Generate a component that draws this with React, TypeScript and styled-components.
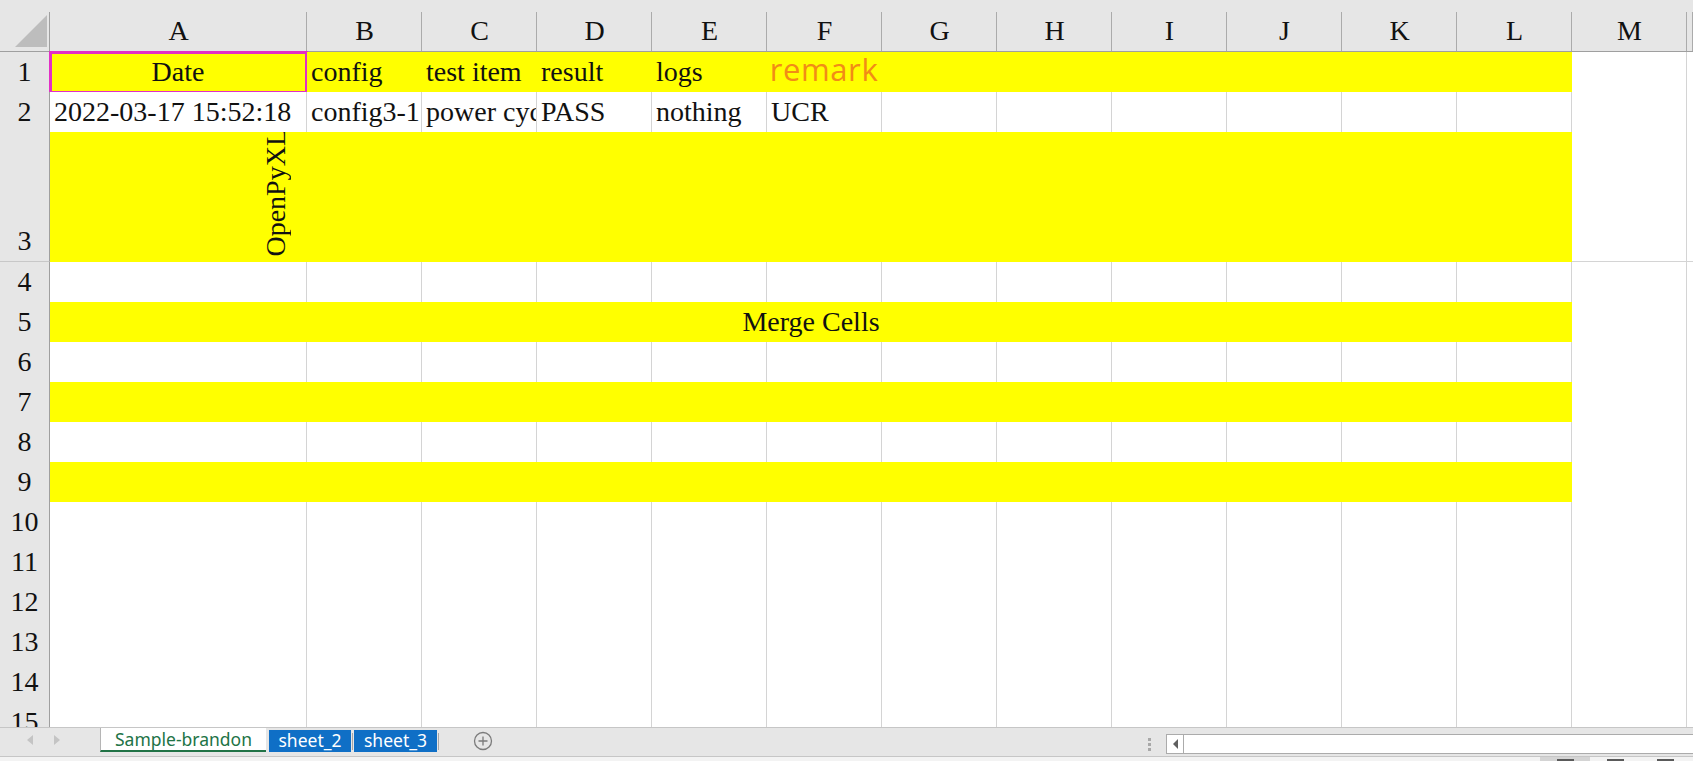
import styled, { createGlobalStyle } from 'styled-components';

const YELLOW = '#ffff00';
const GRID_LINE = '#d4d4d4';
const HEADER_BG = '#e6e6e6';
const HEADER_LINE = '#ababab';
const HEADER_EDGE = '#9f9f9f';
const EXCEL_GREEN = '#217346';
const TAB_BLUE = '#0f6fc6';

const COLUMNS = ['A', 'B', 'C', 'D', 'E', 'F', 'G', 'H', 'I', 'J', 'K', 'L', 'M'];
const TEMPLATE = '50px 257px repeat(12, 115px) 1fr';

const GlobalStyle = createGlobalStyle`
	html, body {
		margin: 0;
		padding: 0;
		background: #ffffff;
		overflow: hidden;
	}
	#root {
		width: 1693px;
		height: 761px;
	}
`;

const Window = styled.div`
	width: 1693px;
	height: 761px;
	display: flex;
	flex-direction: column;
	font-family: 'Liberation Serif', 'Times New Roman', serif;
	color: #111111;
	overflow: hidden;
`;

const Sheet = styled.div`
	flex: 0 0 727px;
	display: flex;
	flex-direction: column;
	overflow: hidden;
`;

const Row = styled.div<{ $height: number }>`
	display: grid;
	grid-template-columns: ${TEMPLATE};
	height: ${(p) => p.$height}px;
	flex-shrink: 0;
`;

const HeaderRow = styled(Row)`
	box-sizing: border-box;
	background: ${HEADER_BG};
	border-bottom: 1px solid ${HEADER_EDGE};
`;

const ColumnHeader = styled.div`
	display: flex;
	align-items: flex-end;
	justify-content: center;
	font-size: 28px;
	line-height: 40px;
	background: linear-gradient(${HEADER_LINE}, ${HEADER_LINE}) right bottom / 1px 39px no-repeat;
`;

const Corner = styled(ColumnHeader)`
	justify-content: flex-end;
	padding: 0 3px 4px 0;
	background: linear-gradient(${HEADER_EDGE}, ${HEADER_EDGE}) right bottom / 1px 39px no-repeat;
`;

const RowHeader = styled.div`
	box-sizing: border-box;
	display: flex;
	align-items: flex-end;
	justify-content: center;
	background: ${HEADER_BG};
	border-right: 1px solid ${HEADER_EDGE};
	border-bottom: 1px solid #c8c8c8;
	font-size: 28px;
	line-height: 40px;
`;

const Cell = styled.div<{ $fill?: boolean; $span?: number; $align?: 'left' | 'center' | 'right'; $selected?: boolean }>`
	box-sizing: border-box;
	grid-column: span ${(p) => p.$span ?? 1};
	display: flex;
	align-items: flex-end;
	justify-content: ${(p) => (p.$align === 'center' ? 'center' : p.$align === 'right' ? 'flex-end' : 'flex-start')};
	padding: 0 4px;
	min-width: 0;
	overflow: hidden;
	white-space: nowrap;
	font-size: 28px;
	line-height: 40px;
	background: ${(p) => (p.$fill ? YELLOW : '#ffffff')};
	border-right: 1px solid ${(p) => (p.$fill ? YELLOW : GRID_LINE)};
	border-bottom: 1px solid ${(p) => (p.$fill ? YELLOW : GRID_LINE)};
	outline: ${(p) => (p.$selected ? '3px solid #e22fc5' : 'none')};
	outline-offset: -2px;
`;

const VerticalCell = styled(Cell)`
	padding: 0 16px 4px 0;
`;

const VerticalText = styled.span`
	writing-mode: vertical-rl;
	transform: rotate(180deg);
	line-height: 28px;
`;

const RemarkText = styled.span`
	font-family: 'Open Sans', 'Noto Sans', sans-serif;
	font-size: 31px;
	font-weight: 500;
	line-height: 30px;
	letter-spacing: 0.6px;
	color: #f28c16;
	margin-bottom: 8px;
`;

const MergedText = styled.span`
	padding-left: 1px;
`;

/* tab bar */

const TabBar = styled.div`
	flex: 0 0 28px;
	box-sizing: border-box;
	display: flex;
	align-items: flex-start;
	background: ${HEADER_BG};
	border-top: 1px solid #c6c6c6;
	font-family: 'Noto Sans', 'Open Sans', sans-serif;
	font-size: 17.5px;
`;

const NavArrows = styled.div`
	width: 100px;
	height: 24px;
	display: flex;
	align-items: center;
	gap: 21px;
	padding-left: 27px;
	box-sizing: border-box;
`;

const NavArrow = styled.span<{ $dir: 'left' | 'right' }>`
	width: 0;
	height: 0;
	border-top: 5px solid transparent;
	border-bottom: 5px solid transparent;
	${(p) => (p.$dir === 'left' ? 'border-right' : 'border-left')}: 6px solid #c4c4c4;
`;

const ActiveTab = styled.div`
	box-sizing: border-box;
	width: 166px;
	height: 24px;
	display: flex;
	align-items: center;
	justify-content: center;
	background: #ffffff;
	border-left: 1px solid #b5b5b5;
	border-bottom: 2px solid ${EXCEL_GREEN};
	color: ${EXCEL_GREEN};
	padding-bottom: 1px;
`;

const SheetTab = styled.div<{ $width: number; $gap?: number }>`
	box-sizing: border-box;
	width: ${(p) => p.$width}px;
	height: 22px;
	margin: 2px 0 0 ${(p) => p.$gap ?? 0}px;
	display: flex;
	align-items: center;
	justify-content: center;
	background: ${TAB_BLUE};
	color: #ffffff;
	padding-bottom: 3px;
`;

const TabSeparator = styled.span`
	width: 1px;
	height: 17px;
	margin: 5px 1px 0;
	background: #a6a6a6;
`;

const AddSheet = styled.div`
	width: 20px;
	height: 20px;
	margin: 3px 0 0 33px;
	display: flex;
`;

const RightGroup = styled.div`
	margin-left: auto;
	display: flex;
	align-items: center;
	gap: 15px;
	height: 24px;
	margin-top: 4px;
`;

const Grip = styled.div`
	display: flex;
	flex-direction: column;
	gap: 2px;
`;

const GripDot = styled.span`
	width: 3px;
	height: 3px;
	background: #a8a8a8;
`;

const ScrollBar = styled.div`
	box-sizing: border-box;
	width: 527px;
	height: 20px;
	display: flex;
	background: #ffffff;
	border: 1px solid ${HEADER_LINE};
	border-right: none;
`;

const ScrollButton = styled.div`
	box-sizing: border-box;
	width: 17px;
	height: 100%;
	display: flex;
	align-items: center;
	justify-content: center;
	border-right: 1px solid ${HEADER_LINE};
`;

const ScrollArrow = styled.span`
	width: 0;
	height: 0;
	border-top: 5px solid transparent;
	border-bottom: 5px solid transparent;
	border-right: 5px solid #606060;
`;

/* status strip */

const StatusStrip = styled.div`
	flex: 0 0 6px;
	box-sizing: border-box;
	display: flex;
	justify-content: flex-end;
	background: #f3f3f3;
	border-top: 1px solid #c6c6c6;
	overflow: hidden;
	padding-right: 3px;
`;

const ViewButton = styled.div<{ $active?: boolean }>`
	width: 50px;
	display: flex;
	justify-content: center;
	background: ${(p) => (p.$active ? '#d4d4d4' : 'transparent')};
`;

const ViewGlyph = styled.span`
	width: 17px;
	height: 3px;
	margin-top: 2px;
	background: #5a5a5a;
`;

type CellSpec = {
	text?: string;
	fill?: boolean;
	span?: number;
	align?: 'left' | 'center' | 'right';
	kind?: 'remark' | 'vertical' | 'merged';
	selected?: boolean;
};

type RowSpec = { height: number; cells: CellSpec[] };

const empty = (count: number, fill = false): CellSpec[] => Array.from({ length: count }, () => ({ fill }));

const yellowBand = (text?: string): CellSpec[] => [
	{ fill: true, span: 12, align: 'center', text, kind: text ? 'merged' : undefined },
	{},
	{},
];

const ROWS: RowSpec[] = [
	{
		height: 40,
		cells: [
			{ text: 'Date', fill: true, align: 'center', selected: true },
			{ text: 'config', fill: true },
			{ text: 'test item', fill: true },
			{ text: 'result', fill: true },
			{ text: 'logs', fill: true },
			{ text: 'remark', fill: true, align: 'center', kind: 'remark' },
			...empty(6, true),
			{},
			{},
		],
	},
	{
		height: 40,
		cells: [
			{ text: '2022-03-17 15:52:18' },
			{ text: 'config3-1' },
			{ text: 'power cycle' },
			{ text: 'PASS' },
			{ text: 'nothing' },
			{ text: 'UCR' },
			...empty(8),
		],
	},
	{
		height: 130,
		cells: [{ text: 'OpenPyXL', fill: true, align: 'right', kind: 'vertical' }, ...empty(11, true), {}, {}],
	},
	{ height: 40, cells: empty(14) },
	{ height: 40, cells: yellowBand('Merge Cells') },
	{ height: 40, cells: empty(14) },
	{ height: 40, cells: yellowBand() },
	{ height: 40, cells: empty(14) },
	{ height: 40, cells: yellowBand() },
	...Array.from({ length: 6 }, () => ({ height: 40, cells: empty(14) })),
];

function renderCell(cell: CellSpec, key: number) {
	if (cell.kind === 'vertical') {
		return (
			<VerticalCell key={key} $fill={cell.fill} $align="right">
				<VerticalText>{cell.text}</VerticalText>
			</VerticalCell>
		);
	}
	return (
		<Cell key={key} $fill={cell.fill} $span={cell.span} $align={cell.align} $selected={cell.selected}>
			{cell.kind === 'remark' ? (
				<RemarkText>{cell.text}</RemarkText>
			) : cell.kind === 'merged' ? (
				<MergedText>{cell.text}</MergedText>
			) : (
				cell.text
			)}
		</Cell>
	);
}

function SelectAllTriangle() {
	return (
		<svg width="32" height="32" viewBox="0 0 32 32">
			<polygon points="32,0 32,32 0,32" fill="#bdbdbd" />
		</svg>
	);
}

function PlusCircle() {
	return (
		<svg width="20" height="20" viewBox="0 0 20 20">
			<circle cx="10" cy="10" r="8.5" fill="none" stroke="#7b7b7b" strokeWidth="1.3" />
			<path d="M10 5.5v9M5.5 10h9" stroke="#7b7b7b" strokeWidth="1.3" />
		</svg>
	);
}

export default function App() {
	return (
		<>
			<GlobalStyle />
			<Window>
				<Sheet>
					<HeaderRow $height={52}>
						<Corner>
							<SelectAllTriangle />
						</Corner>
						{COLUMNS.map((letter) => (
							<ColumnHeader key={letter}>{letter}</ColumnHeader>
						))}
						<ColumnHeader />
					</HeaderRow>
					{ROWS.map((row, index) => (
						<Row key={index} $height={row.height}>
							<RowHeader>{index + 1}</RowHeader>
							{row.cells.map((cell, i) => renderCell(cell, i))}
						</Row>
					))}
				</Sheet>
				<TabBar>
					<NavArrows>
						<NavArrow $dir="left" />
						<NavArrow $dir="right" />
					</NavArrows>
					<ActiveTab>Sample-brandon</ActiveTab>
					<SheetTab $width={82} $gap={3}>
						sheet_2
					</SheetTab>
					<TabSeparator />
					<SheetTab $width={83}>sheet_3</SheetTab>
					<TabSeparator />
					<AddSheet>
						<PlusCircle />
					</AddSheet>
					<RightGroup>
						<Grip>
							<GripDot />
							<GripDot />
							<GripDot />
						</Grip>
						<ScrollBar>
							<ScrollButton>
								<ScrollArrow />
							</ScrollButton>
						</ScrollBar>
					</RightGroup>
				</TabBar>
				<StatusStrip>
					<ViewButton $active>
						<ViewGlyph />
					</ViewButton>
					<ViewButton>
						<ViewGlyph />
					</ViewButton>
					<ViewButton>
						<ViewGlyph />
					</ViewButton>
				</StatusStrip>
			</Window>
		</>
	);
}
